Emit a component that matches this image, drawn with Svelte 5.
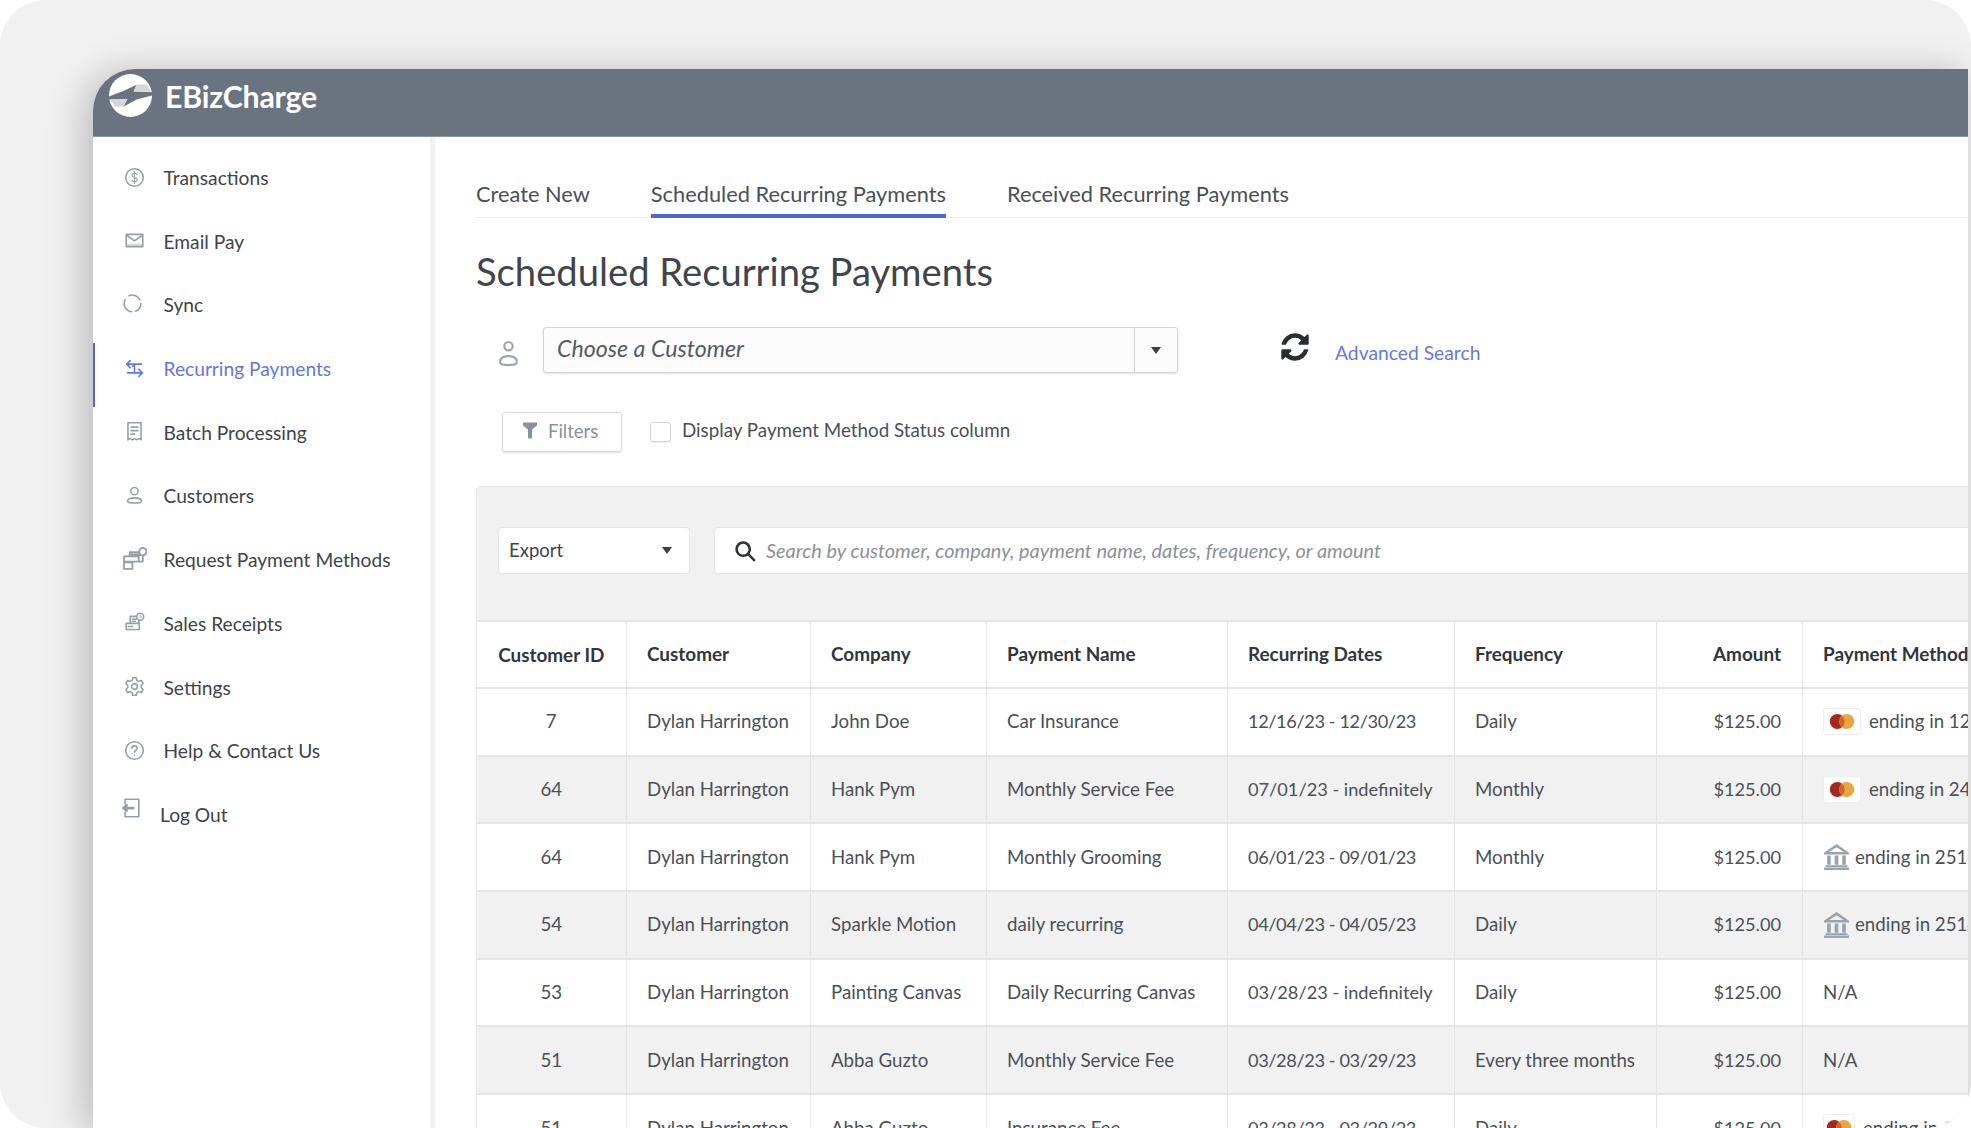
<script>
  const nav = [
    { id: 'dollar', label: 'Transactions' },
    { id: 'mail', label: 'Email Pay' },
    { id: 'sync', label: 'Sync' },
    { id: 'recur', label: 'Recurring Payments', active: true },
    { id: 'batch', label: 'Batch Processing' },
    { id: 'user', label: 'Customers' },
    { id: 'request', label: 'Request Payment Methods' },
    { id: 'receipt', label: 'Sales Receipts' },
    { id: 'gear', label: 'Settings' },
    { id: 'help', label: 'Help & Contact Us' },
    { id: 'logout', label: 'Log Out', last: true }
  ];
  const rows = [
    ['7', 'John Doe', 'Car Insurance', '12/16/23 - 12/30/23', 'Daily', 'mc', 'ending in 1234'],
    ['64', 'Hank Pym', 'Monthly Service Fee', '07/01/23 - indefinitely', 'Monthly', 'mc', 'ending in 2424'],
    ['64', 'Hank Pym', 'Monthly Grooming', '06/01/23 - 09/01/23', 'Monthly', 'bank', 'ending in 2514'],
    ['54', 'Sparkle Motion', 'daily recurring', '04/04/23 - 04/05/23', 'Daily', 'bank', 'ending in 2514'],
    ['53', 'Painting Canvas', 'Daily Recurring Canvas', '03/28/23 - indefinitely', 'Daily', '', 'N/A'],
    ['51', 'Abba Guzto', 'Monthly Service Fee', '03/28/23 - 03/29/23', 'Every three months', '', 'N/A'],
    ['51', 'Abba Guzto', 'Insurance Fee', '03/28/23 - 03/29/23', 'Daily', 'mc small', 'ending in 1234']
  ];
</script>

<div class="page">
  <div class="window">
    <header class="topbar">
      <svg class="logo" viewBox="0 0 42 42" aria-hidden="true">
        <circle cx="21" cy="21" r="21" fill="#fff" />
        <path d="M0 22 L14 16.500 L27 10.500 L24 17 L42 17.500 L42 21 L27 25 L14 32 L18 24.500 L0 25 Z" fill="#6a7480" />
        <path d="M27 10.500 L37 10 L41 17 L24 17 Z M14 32 L6 32 L1 25 L18 24.500 Z" fill="#d4d6d8" />
      </svg>
      <span class="brand">EBizCharge</span>
    </header>
    <div class="body">
      <nav class="sidebar">
        {#each nav as item}
          <div class="item" class:active={item.active} class:last={item.last}>
            <span class="ico ico-{item.id}">
              <svg viewBox="0 0 24 24" fill="none" stroke="currentColor" stroke-width="1.800" stroke-linecap="round" stroke-linejoin="round" aria-hidden="true">
                {#if item.id === 'dollar'}
                  <circle cx="12" cy="12" r="10" />
                  <path d="M15 8.500c-.6-1-1.700-1.400-3-1.400-1.600 0-2.800.8-2.800 2.300 0 3.200 5.800 1.800 5.800 5 0 1.500-1.300 2.400-3 2.400-1.400 0-2.500-.5-3.100-1.600M12 5.500v13" stroke-width="1.200" />
                {:else if item.id === 'mail'}
                  <rect x="2.500" y="5" width="19" height="14" />
                  <path d="M3 6l9 6.500L21 6" />
                  <path d="M3 15.500h18v3.500H3z" fill="currentColor" fill-opacity=".35" stroke="none" />
                {:else if item.id === 'sync'}
                  <path d="M8 3.200A9.500 9.500 0 0 1 20.500 8M21.500 12a9.500 9.500 0 0 1-6 8.900M11 21.400A9.500 9.500 0 0 1 3.600 7.500" />
                {:else if item.id === 'recur'}
                  <path d="M3 7h17M7 3L3 7l4 4M21 17H4M17 13l4 4-4 4M12 7.500v8.500M10 9.500l2-2" />
                {:else if item.id === 'batch'}
                  <path d="M4.500 2h15v19.500l-2.500-1.300-2.500 1.300-2.500-1.300-2.500 1.300-2.500-1.300-2.500 1.300z" />
                  <path d="M8 7h8M8 11h8M8 15h4" />
                {:else if item.id === 'user'}
                  <circle cx="12" cy="7" r="4.200" />
                  <path d="M4 18.500c0-2.600 3.500-3.800 8-3.800s8 1.200 8 3.800c0 1.700-3.500 2-8 2s-8-.3-8-2z" />
                {:else if item.id === 'request'}
                  <path d="M7.500 8V5h12.500v9h-3" />
                  <path d="M2 9h14v5h-6v7H2z" />
                  <path d="M7.500 7.500H20M2.500 14.500H9" stroke-width="2.400" />
                  <circle cx="20" cy="4.500" r="3.500" fill="#fff" />
                {:else if item.id === 'receipt'}
                  <path d="M7 12V5h10v8" />
                  <path d="M9.500 8H14M9.500 10.500H13" />
                  <rect x="2.500" y="13" width="15" height="7" />
                  <path d="M5 16.500h5" />
                  <circle cx="18.500" cy="5.500" r="4" fill="#fff" />
                  <path d="M18.500 3.800v2h1.500" stroke-width="1" />
                {:else if item.id === 'gear'}
                  <circle cx="12" cy="12" r="3.300" />
                  <path d="M10 2h4l.7 3 2.300 1.200 2.900-1.100 2 3.500-2.200 2.100v2.600l2.200 2.100-2 3.500-2.900-1.100L14.700 19 14 22h-4l-.7-3L7 17.800l-2.900 1.100-2-3.500 2.200-2.100v-2.600L2.100 8.600l2-3.500L7 6.200 9.300 5z" />
                {:else if item.id === 'help'}
                  <circle cx="12" cy="12" r="10" />
                  <path d="M9 9.500c0-1.700 1.300-2.800 3-2.800s3 1.100 3 2.600c0 2.300-3 2.400-3 4.700M12 17.300v.2" />
                {:else if item.id === 'logout'}
                  <path d="M5.500 7.500V2.500h15v19h-15v-5" />
                  <path d="M14.500 12H6" stroke-width="3" />
                  <path d="M7.500 8.200L3 12l4.500 3.800z" fill="currentColor" />
                {/if}
              </svg>
            </span>
            <span class="label">{item.label}</span>
          </div>
        {/each}
      </nav>
      <main class="main">
        <div class="tabs">
          <span class="tab">Create New</span>
          <span class="tab on">Scheduled Recurring Payments</span>
          <span class="tab">Received Recurring Payments</span>
        </div>
        <h1>Scheduled Recurring Payments</h1>
        <div class="choose">
          <svg class="person" viewBox="0 0 20 26" fill="none" stroke="#9aa3ad" stroke-width="2" aria-hidden="true">
            <circle cx="10" cy="6" r="4" />
            <path d="M2 21c0-4 3.500-5.500 8-5.500s8 1.500 8 5.500c0 2.200-.8 3-8 3s-8-.8-8-3z" />
          </svg>
          <div class="combo">
            <span class="combo-text">Choose a Customer</span>
            <span class="combo-btn"><i class="tri"></i></span>
          </div>
          <svg class="refresh" viewBox="0 0 1792 1792" aria-hidden="true">
            <path fill="#2b2e31" d="M1639 1056q0 5-1 7-64 268-268 434.500t-478 166.500q-146 0-282.500-55t-243.500-157l-129 129q-19 19-45 19t-45-19-19-45v-448q0-26 19-45t45-19h448q26 0 45 19t19 45-19 45l-137 137q71 66 161 102t187 36q134 0 250-65t186-179q11-17 53-117 8-23 30-23h192q13 0 22.500 9.500t9.500 22.500zm25-800v448q0 26-19 45t-45 19h-448q-26 0-45-19t-19-45 19-45l138-138q-148-137-349-137-134 0-250 65t-186 179q-11 17-53 117-8 23-30 23h-199q-13 0-22.500-9.500t-9.500-22.500v-7q65-268 270-434.500t480-166.500q146 0 284 55.500t245 156.500l130-129q19-19 45-19t45 19 19 45z" />
          </svg>
          <span class="adv">Advanced Search</span>
        </div>
        <div class="filters">
          <span class="filter-btn">
            <svg viewBox="0 0 16 18" aria-hidden="true"><path d="M1 1h14v3L10 8v9H6V8L1 4z" fill="#8a939c" /></svg>
            <span>Filters</span>
          </span>
          <span class="check"></span>
          <span class="check-label">Display Payment Method Status column</span>
        </div>
        <section class="panel">
          <div class="toolbar">
            <div class="export"><span>Export</span><i class="tri"></i></div>
            <div class="search">
              <svg viewBox="0 0 24 24" fill="none" stroke="#30353a" stroke-width="2.800" aria-hidden="true">
                <circle cx="10" cy="10" r="7.200" /><path d="M15.500 15.500L22 22" stroke-linecap="round" />
              </svg>
              <span class="ph">Search by customer, company, payment name, dates, frequency, or amount</span>
            </div>
          </div>
          <table>
            <thead>
              <tr>
                <th class="c-id">Customer ID</th>
                <th class="c-cust">Customer</th>
                <th class="c-comp">Company</th>
                <th class="c-name">Payment Name</th>
                <th class="c-date">Recurring Dates</th>
                <th class="c-freq">Frequency</th>
                <th class="c-amt">Amount</th>
                <th class="c-pm">Payment Method</th>
              </tr>
            </thead>
            <tbody>
              {#each rows as r}
                <tr>
                  <td class="c-id">{r[0]}</td>
                  <td>Dylan Harrington</td>
                  <td>{r[1]}</td>
                  <td>{r[2]}</td>
                  <td class="num" class:tight={!r[3].includes('indef')}>{r[3]}</td>
                  <td>{r[4]}</td>
                  <td class="c-amt num">$125.00</td>
                  <td class="pm">
                    <div class="pm-in">
                      {#if r[5].startsWith('mc')}
                        <span class="badge" class:small={r[5] === 'mc small'}>
                          <svg viewBox="0 0 24 16" aria-hidden="true">
                            <circle cx="8" cy="8" r="6.500" fill="#a5281f" />
                            <circle cx="16" cy="8" r="6.500" fill="#e9a53f" />
                            <path d="M12 3a6.500 6.500 0 0 1 0 10 6.500 6.500 0 0 1 0-10z" fill="#d2622a" />
                          </svg>
                        </span>
                      {:else if r[5] === 'bank'}
                        <svg class="bank" viewBox="0 0 26 26" fill="#97a3af" aria-hidden="true">
                          <path d="M13 1L25 9.500v1.500H1V9.500zM13 4L6 8.700h14z" fill-rule="evenodd" />
                          <path d="M4 12h3.500v9H4zM11.200 12h3.600v9h-3.600zM18.500 12H22v9h-3.500zM2.500 21.500h21V23h-21zM1 23.500h24V26H1z" />
                        </svg>
                      {/if}
                      <span>{r[6]}</span>
                    </div>
                  </td>
                </tr>
              {/each}
            </tbody>
          </table>
        </section>
      </main>
    </div>
  </div>
</div>

<style>
  :global(body) { margin: 0; background: #fff; overflow: hidden; }
  .page {
    width: 1971px; height: 1128px; box-sizing: border-box;
    padding: 69px 3px 0 93px;
    background: #f1f1f1; border-radius: 46px; overflow: hidden;
    font-family: Lato, "Liberation Sans", sans-serif; color: #4a5057;
  }
  .window {
    height: 1059px; display: flex; flex-direction: column; background: #fff;
    border-top-left-radius: 42px;
    box-shadow: -8px 4px 38px rgba(0, 0, 0, .24);
  }
  .topbar {
    height: 68px; flex: none; box-sizing: border-box; display: flex; align-items: flex-start;
    background: #6a7480; border-bottom: 1px solid #8b95a0;
    border-top-left-radius: 42px; padding: 5px 0 0 16px;
  }
  .logo { width: 43px; height: 43px; flex: none; }
  .brand {
    margin: 2px 0 0 13px; color: #fff; font-size: 30.300px; font-weight: 700; line-height: 40px; letter-spacing: -.2px;
  }
  .body { flex: 1; display: flex; min-height: 0; }
  .sidebar {
    width: 337px; flex: none; box-sizing: border-box; padding-top: 15px;
    background: #fff;
  }
  .item {
    height: 63.700px; box-sizing: border-box; display: flex; align-items: flex-start;
    padding: 14px 0 0 27px; position: relative;
    font-size: 19.200px; line-height: 24px; color: #3e444a;
  }
  .item.active { color: #6078e0; }
  .item.active::before {
    content: ''; position: absolute; left: 0; top: 0; bottom: 0; width: 2px; background: #5068dd;
  }
  .item.last { padding-left: 24px; }
  .ico { width: 28px; height: 24px; flex: none; display: flex; justify-content: center; align-items: center; margin-right: 15.500px; color: #959fa9; position: relative; top: -1px; }
  .item.active .ico { color: #6078e0; }
  .ico svg { width: 21px; height: 21px; }
  .ico-sync { left: -2px; top: -2px; }
  .ico-request svg { width: 25px; height: 25px; }
  .ico-logout { top: -7px; }
  .ico-logout svg { width: 22px; height: 24px; }
  .item.last .ico { margin-right: 15px; }
  .main {
    flex: 1; min-width: 0; overflow: hidden; border-left: 5px solid #f1f1f1;
    padding: 0 0 0 41px;
  }
  .tabs {
    height: 81px; box-sizing: border-box; display: flex; gap: 61px; align-items: flex-end;
    border-bottom: 1px solid #ececec;
  }
  .tab {
    height: 37px; box-sizing: border-box; font-size: 21.800px; line-height: 28px; color: #4a5057; white-space: nowrap;
  }
  .tab.on { border-bottom: 4px solid #4e67d8; margin-bottom: -1px; height: 38px; }
  h1 { margin: 0; height: 110px; box-sizing: border-box; padding-top: 31px; font-size: 38.200px; line-height: 44px; font-weight: 400; color: #3f454b; }
  .choose { display: flex; align-items: center; height: 44px; padding-left: 22px; }
  .person { width: 21px; height: 27px; margin: 6px 24px 0 0; flex: none; }
  .combo {
    width: 635px; height: 46px; box-sizing: border-box; display: flex; align-items: stretch;
    border: 1px solid #d3d6d9; border-radius: 3px; box-shadow: 0 1px 2px rgba(0, 0, 0, .12);
    background: #fcfcfc;
  }
  .combo-text { flex: 1; padding-left: 13px; font-style: italic; font-size: 23.200px; line-height: 40px; color: #555b62; }
  .combo-btn { width: 42px; border-left: 1px solid #d3d6d9; display: flex; align-items: center; justify-content: center; }
  .tri { display: block; width: 0; height: 0; border: 5.500px solid transparent; border-top: 7px solid #3a3f44; border-bottom: 0; }
  .refresh { width: 32px; height: 32px; margin-left: 101px; flex: none; position: relative; top: -3px; }
  .adv { margin-left: 24px; font-size: 19.300px; color: #6478e8; position: relative; top: 2px; white-space: nowrap; }
  .filters { display: flex; align-items: center; height: 40px; margin-top: 40px; padding-left: 26px; }
  .filter-btn {
    width: 120px; height: 40px; box-sizing: border-box; display: flex; align-items: center; gap: 10px; padding: 0 0 3px 19px;
    border: 1px solid #d8dbde; border-radius: 3px; box-shadow: 0 1px 2px rgba(0, 0, 0, .14);
    font-size: 18.500px; line-height: 24px; color: #8a929a;
  }
  .filter-btn svg { width: 16px; height: 19px; flex: none; }
  .check { width: 21px; height: 20px; box-sizing: border-box; margin-left: 28px; border: 1px solid #d0d3d6; border-radius: 3px; box-shadow: 0 1px 1px rgba(0, 0, 0, .08); }
  .check-label { margin-left: 11px; font-size: 18.800px; line-height: 24px; color: #4a5057; white-space: nowrap; position: relative; top: -2px; }
  .panel {
    margin-top: 34px; width: 1600px; box-sizing: border-box; background: #f1f1f1;
    border: 1px solid #e6e6e6; border-radius: 5px 0 0 0;
  }
  .toolbar { height: 133px; box-sizing: border-box; padding: 40px 0 0 21px; display: flex; gap: 24px; align-items: flex-start; }
  .export {
    width: 192px; height: 47px; box-sizing: border-box; display: flex; align-items: center; justify-content: space-between;
    padding: 0 17px 0 10px; background: #fff; border: 1px solid #e6e6e6; border-radius: 4px;
    font-size: 18.500px; line-height: 24px; color: #3e444a;
  }
  .export span { margin-top: -1px; }
  .search {
    flex: 1; height: 47px; box-sizing: border-box; display: flex; align-items: center; gap: 10px;
    padding-left: 19px; background: #fff; border: 1px solid #e6e6e6; border-radius: 4px;
    font-size: 19.900px; font-style: italic; color: #8b9198;
  }
  .search .ph { margin-top: -2px; }
  .search svg { width: 22px; height: 22px; flex: none; }
  table { border-collapse: collapse; table-layout: fixed; width: 1592px; font-size: 18.700px; }
  tbody tr:nth-child(even) { background: #f1f1f1; }
  tbody tr:nth-child(odd), thead tr { background: #fff; }
  th, td {
    height: 67.700px; box-sizing: border-box; padding: 0 20.500px 1px; text-align: left; white-space: nowrap; overflow: hidden;
    border: 1px solid #e4e5e6; border-width: 2px 1px 1px 1px;
  }
  th { height: 67px; padding-bottom: 3px; font-weight: 700; color: #30363c; font-size: 18.900px; }
  th:first-child, td:first-child { border-left: 0; }
  .c-id { width: 149px; text-align: center; padding: 0 0 1px; }
  .c-cust { width: 184px; }
  .c-comp { width: 176px; }
  .c-name { width: 241px; }
  .c-date { width: 227px; }
  .c-freq { width: 202px; }
  .c-amt { width: 146px; text-align: right; }
  .c-pm { width: 267px; }
  td.num { font-size: 18.200px; }
  td.tight { letter-spacing: -.4px; }
  .pm-in { display: flex; align-items: center; gap: 7px; position: relative; }
  .badge {
    width: 38px; height: 27px; box-sizing: border-box; display: flex; align-items: center; justify-content: center;
    background: #fff; border: 1px solid #eeeeee; border-radius: 3px; margin-right: 1px; flex: none;
  }
  .badge.small { width: 32px; }
  .badge svg { width: 28px; height: 19px; }
  .bank { width: 27px; height: 27px; flex: none; margin-right: -2px; }
</style>
